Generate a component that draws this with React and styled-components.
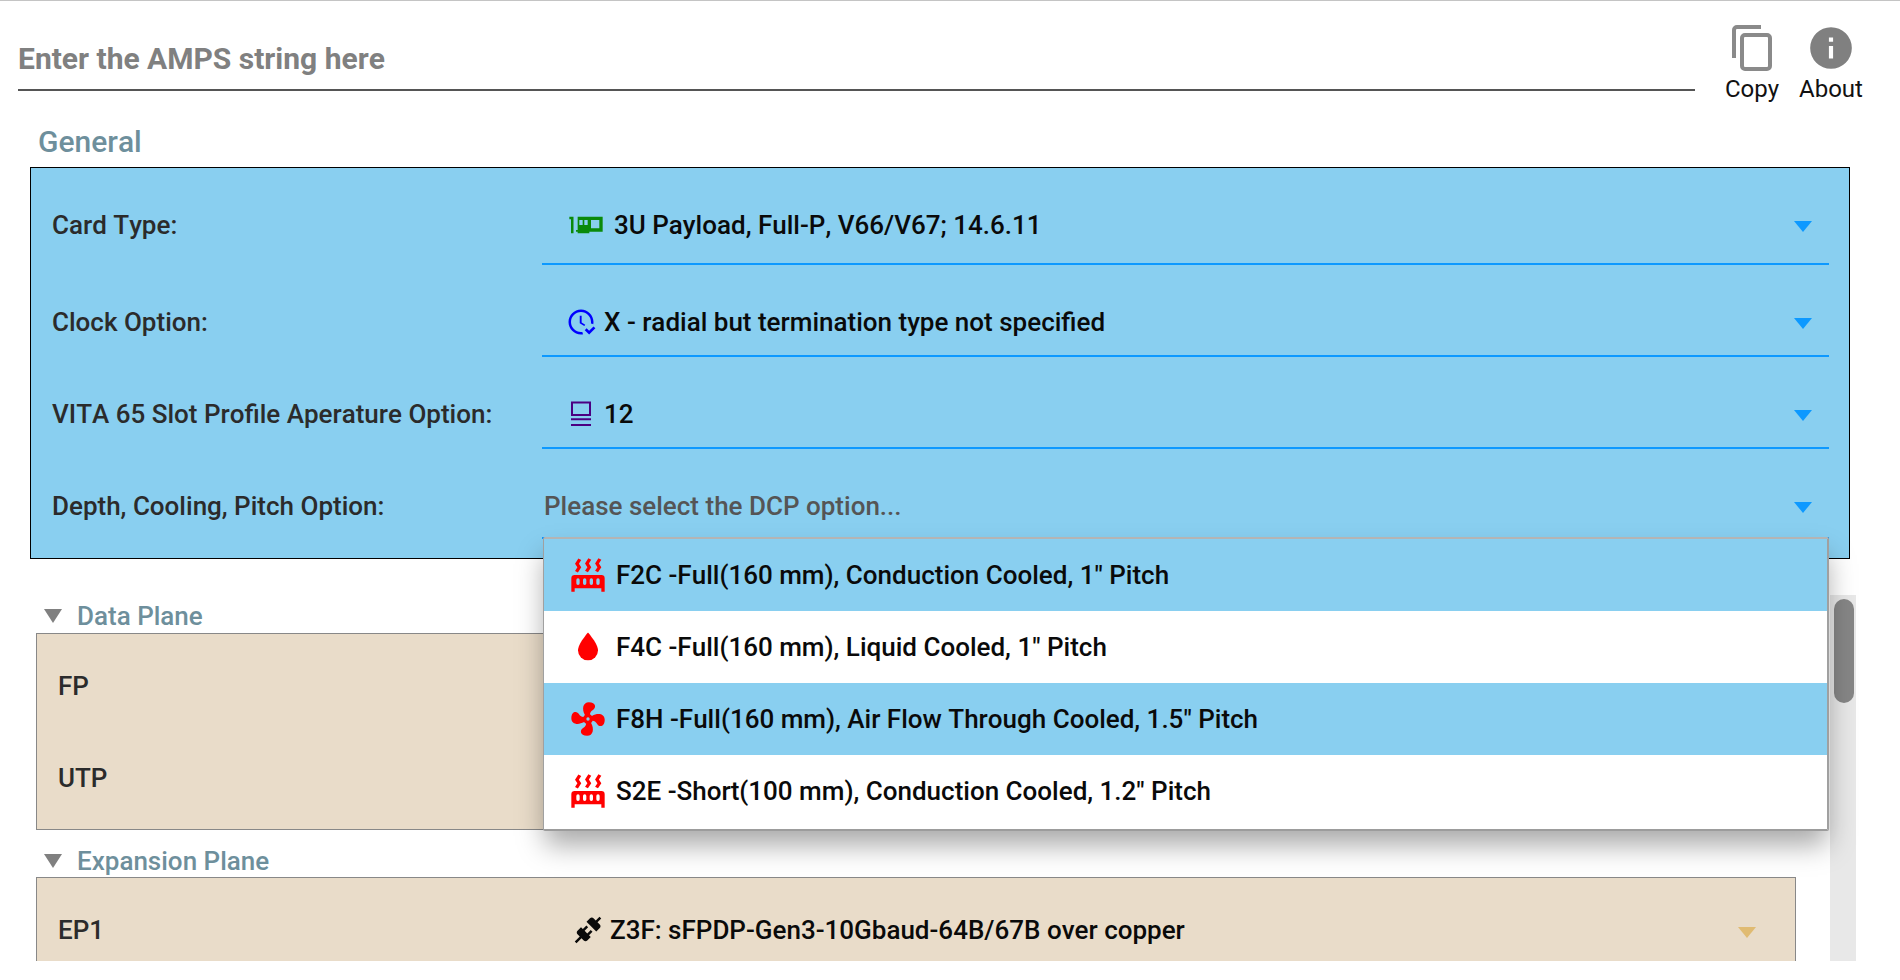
import React from 'react';
import styled, { createGlobalStyle } from 'styled-components';

const GlobalStyle = createGlobalStyle`
  html, body {
    margin: 0;
    padding: 0;
    background: #fff;
    font-family: Roboto, "Liberation Sans", sans-serif;
    font-kerning: none;
  }
`

const Page = styled.div`
  height: 961px;
  overflow: hidden;
  border-top: 1px solid #c4c4c4;
  box-sizing: border-box;
`

const Header = styled.div`
  display: flex;
  height: 119px;
`

const AmpsField = styled.div`
  width: 1677px;
  height: 90px;
  margin-left: 18px;
  box-sizing: border-box;
  border-bottom: 2px solid #555;
  padding-top: 40px;
  font-size: 30px;
  line-height: 36px;
  font-weight: 700;
  color: #808080;
`

const ToolButton = styled.div`
  position: absolute;
  top: 23px;
  left: ${p => p.$left}px;
  width: 80px;
  display: flex;
  flex-direction: column;
  align-items: center;
  font-size: 24px;
  line-height: 28px;
  color: #111;
`

const ToolIcon = styled.div`
  height: 50px;
  margin-bottom: 2px;
  display: flex;
  align-items: center;
`

const SectionTitle = styled.div`
  height: 47px;
  padding: 5px 0 0 38px;
  box-sizing: border-box;
  font-size: 30px;
  line-height: 34px;
  font-weight: 500;
  color: #6e8f9c;
`

const GeneralPanel = styled.div`
  width: 1820px;
  height: 392px;
  margin-left: 30px;
  box-sizing: border-box;
  border: 1.5px solid #000;
  background: #89cff0;
  padding: 0 20px 0 21px;
`

const Row = styled.div`
  display: flex;
  position: relative;
  height: ${p => p.$h}px;
`

const Label = styled.div`
  width: 490px;
  flex-shrink: 0;
  padding-top: 42px;
  font-size: 26px;
  line-height: 30px;
  font-weight: 500;
  color: #2b2b2b;
`

const Select = styled.div`
  flex: 1;
  padding: 42px 0 0 24px;
  box-sizing: border-box;
  border-bottom: 2px solid #0d99ff;
  font-size: 26px;
  line-height: 30px;
  font-weight: 500;
  color: #0a0a0a;
`

const SelectValue = styled.div`
  display: flex;
  align-items: center;
  gap: 8px;
  height: 30px;
  svg { flex-shrink: 0; }
`

const Placeholder = styled.span`
  color: #555;
  margin-left: -22px;
`

const Arrow = styled.div`
  position: absolute;
  top: ${p => p.$top}px;
  right: ${p => p.$right}px;
  width: 0;
  height: 0;
  border-left: 9px solid transparent;
  border-right: 9px solid transparent;
  border-top: 11px solid ${p => p.$color};
`

const Dropdown = styled.div`
  position: absolute;
  top: 88px;
  left: 491px;
  right: 0;
  z-index: 10;
  background: #fff;
  border: 1px solid #a0a0a0;
  border-top: 2px solid #b4b4b4;
  border-bottom: 2px solid #9c9c9c;
  border-right-width: 2px;
  border-radius: 2px;
  box-sizing: border-box;
  box-shadow: 0 16px 26px -2px rgba(0, 0, 0, 0.34);
`

const Option = styled.div`
  height: 72px;
  display: flex;
  align-items: center;
  gap: 8px;
  padding-left: 24px;
  background: ${p => p.$active ? '#89cff0' : '#fff'};
  font-size: 26px;
  font-weight: 500;
  color: #0a0a0a;

  &:last-child {
    height: 74px;
    padding-bottom: 2px;
    box-sizing: border-box;
  }
`

const ScrollArea = styled.div`
  display: flex;
  width: 1856px;
  height: 366px;
  margin-top: 36px;
`

const ScrollContent = styled.div`
  width: 1830px;
  padding-left: 36px;
  box-sizing: border-box;
`

const ScrollTrack = styled.div`
  width: 26px;
  box-sizing: border-box;
  padding: 4px 2px 0 4px;
  background: #e8e8e8;
`

const ScrollThumb = styled.div`
  height: 104px;
  border-radius: 10px;
  background: #868686;
`

const GroupHead = styled.div`
  display: flex;
  align-items: center;
  gap: 15px;
  height: ${p => p.$h}px;
  padding: ${p => p.$pad}px 0 0 8px;
  box-sizing: border-box;
  font-size: 26px;
  font-weight: 500;
  color: #6e8f9c;
`

const Caret = styled.span`
  width: 0;
  height: 0;
  border-left: 9px solid transparent;
  border-right: 9px solid transparent;
  border-top: 14px solid #808080;
`

const GroupPanel = styled.div`
  width: 1760px;
  height: ${p => p.$h}px;
  padding-top: 6px;
  box-sizing: border-box;
  border: 1px solid #888;
  background: #e9dcc9;
`

const GroupRow = styled.div`
  display: flex;
  align-items: center;
  position: relative;
  height: 92px;
  padding-left: 21px;
  font-size: 26px;
  font-weight: 500;
  color: #2b2b2b;
`

const GroupLabel = styled.div`
  width: 515px;
`

const GroupValue = styled.div`
  display: flex;
  align-items: center;
  gap: 7px;
  color: #0a0a0a;
`

const Icon = ({ d, size, color }) => (
  <svg width={size} height={size} viewBox="0 0 24 24" fill={color}><path d={d} /></svg>
)

const cardIcon = 'M2,7H4.5V17H3V8.5H2V7M22,7V16H14V17H7V16H6V15H7V7H22M10,9H8V12H10V9M13,9H11V12H13V9M20,9H15V14H20V9Z'
const clockIcon = 'M23.5 17L18.5 22L15 18.5L16.5 17L18.5 19L22 15.5L23.5 17M13.1 19.9C12.7 20 12.4 20 12 20C7.6 20 4 16.4 4 12S7.6 4 12 4 20 7.6 20 12C20 12.4 20 12.7 19.9 13.1C20.6 13.2 21.2 13.4 21.8 13.7C21.9 13.1 22 12.6 22 12C22 6.5 17.5 2 12 2S2 6.5 2 12 6.5 22 12 22C12.6 22 13.2 21.9 13.7 21.8C13.4 21.3 13.2 20.6 13.1 19.9M12.5 12.3V7H11V13L14.6 15.2L15.4 14.1L12.5 12.3Z'
const radiatorIcon = 'M7.95,3L6.53,5.19L7.95,7.4H7.94L5.95,10.5L4.22,9.6L5.64,7.39L4.22,5.19L6.22,2.09L7.95,3M13.95,2.89L12.53,5.1L13.95,7.3L13.94,7.31L11.95,10.4L10.22,9.5L11.64,7.3L10.22,5.1L12.22,2L13.95,2.89M20,2.89L18.56,5.1L20,7.3V7.31L18,10.4L16.25,9.5L17.67,7.3L16.25,5.1L18.25,2L20,2.89M2,22V14A2,2 0 0,1 4,12H20A2,2 0 0,1 22,14V22H20V20H4V22H2M6,14A1,1 0 0,0 5,15V17A1,1 0 0,0 6,18A1,1 0 0,0 7,17V15A1,1 0 0,0 6,14M10,14A1,1 0 0,0 9,15V17A1,1 0 0,0 10,18A1,1 0 0,0 11,17V15A1,1 0 0,0 10,14M14,14A1,1 0 0,0 13,15V17A1,1 0 0,0 14,18A1,1 0 0,0 15,17V15A1,1 0 0,0 14,14M18,14A1,1 0 0,0 17,15V17A1,1 0 0,0 18,18A1,1 0 0,0 19,17V15A1,1 0 0,0 18,14Z'
const waterIcon = 'M12,20A6,6 0 0,1 6,14C6,10 12,3.25 12,3.25C12,3.25 18,10 18,14A6,6 0 0,1 12,20Z'
const fanIcon = 'M12,11A1,1 0 0,0 11,12A1,1 0 0,0 12,13A1,1 0 0,0 13,12A1,1 0 0,0 12,11M12.5,2C17,2 17.11,5.57 14.75,6.75C13.76,7.24 13.32,8.29 13.13,9.22C13.61,9.42 14.03,9.73 14.35,10.13C18.05,8.13 22.03,8.92 22.03,12.5C22.03,17 18.46,17.1 17.28,14.73C16.78,13.74 15.72,13.3 14.79,13.11C14.59,13.59 14.28,14 13.88,14.34C15.87,18.03 15.08,22 11.5,22C7,22 6.91,18.42 9.27,17.24C10.25,16.75 10.69,15.71 10.89,14.79C10.4,14.59 9.97,14.27 9.65,13.87C5.96,15.85 2,15.07 2,11.5C2,7 5.56,6.89 6.74,9.26C7.24,10.25 8.29,10.68 9.22,10.87C9.41,10.39 9.73,9.97 10.14,9.65C8.15,5.96 8.94,2 12.5,2Z'
const plugIcon = 'M21.4 7.5C22.2 8.3 22.2 9.6 21.4 10.3L18.6 13.1L10.8 5.3L13.6 2.5C14.4 1.7 15.7 1.7 16.4 2.5L18.2 4.3L21.2 1.3L22.6 2.7L19.6 5.7L21.4 7.5M15.6 13.3L14.2 11.9L11.4 14.7L9.3 12.6L12.1 9.8L10.7 8.4L7.9 11.2L6.4 9.8L3.6 12.6C2.8 13.4 2.8 14.7 3.6 15.4L5.4 17.2L1.4 21.2L2.8 22.6L6.8 18.6L8.6 20.4C9.4 21.2 10.7 21.2 11.4 20.4L14.2 17.6L12.8 16.2L15.6 13.3Z'
const infoIcon = 'M13,9H11V7H13M13,17H11V11H13M12,2A10,10 0 0,0 2,12A10,10 0 0,0 12,22A10,10 0 0,0 22,12A10,10 0 0,0 12,2Z'

const CopyIcon = () => (
  <svg width="40" height="46" viewBox="0 0 40 46" fill="none" stroke="#8a8a8a" strokeWidth="4">
    <path d="M29 2H5a3 3 0 0 0-3 3v28" />
    <rect x="10" y="10" width="28" height="34" rx="3" />
  </svg>
)

const SlotIcon = () => (
  <svg width="30" height="30" viewBox="0 0 24 24" fill="none" stroke="#4b0082" strokeWidth="1.6">
    <rect x="4.8" y="2.8" width="14.4" height="10" />
    <path d="M4 16.2H20M4 20.8H20" />
  </svg>
)

const options = [
  { icon: radiatorIcon, text: 'F2C -Full(160 mm), Conduction Cooled, 1" Pitch', active: true },
  { icon: waterIcon, text: 'F4C -Full(160 mm), Liquid Cooled, 1" Pitch' },
  { icon: fanIcon, text: 'F8H -Full(160 mm), Air Flow Through Cooled, 1.5" Pitch', active: true },
  { icon: radiatorIcon, text: 'S2E -Short(100 mm), Conduction Cooled, 1.2" Pitch' },
]

export default function App() {
  return (
    <Page>
      <GlobalStyle />
      <Header>
        <AmpsField>Enter the AMPS string here</AmpsField>
        <ToolButton $left={1712}>
          <ToolIcon><CopyIcon /></ToolIcon>
          <span>Copy</span>
        </ToolButton>
        <ToolButton $left={1791}>
          <ToolIcon><Icon d={infoIcon} size={50} color="#808080" /></ToolIcon>
          <span>About</span>
        </ToolButton>
      </Header>
      <SectionTitle>General</SectionTitle>
      <GeneralPanel>
        <Row $h={97}>
          <Label>Card Type:</Label>
          <Select>
            <SelectValue>
              <Icon d={cardIcon} size={40} color="#0a8a0a" />
              <span>3U Payload, Full-P, V66/V67; 14.6.11</span>
            </SelectValue>
          </Select>
          <Arrow $top={53} $right={17} $color="#0d99ff" />
        </Row>
        <Row $h={92}>
          <Label>Clock Option:</Label>
          <Select>
            <SelectValue>
              <Icon d={clockIcon} size={30} color="#0000ff" />
              <span>X - radial but termination type not specified</span>
            </SelectValue>
          </Select>
          <Arrow $top={53} $right={17} $color="#0d99ff" />
        </Row>
        <Row $h={92}>
          <Label>VITA 65 Slot Profile Aperature Option:</Label>
          <Select>
            <SelectValue>
              <SlotIcon />
              <span>12</span>
            </SelectValue>
          </Select>
          <Arrow $top={53} $right={17} $color="#0d99ff" />
        </Row>
        <Row $h={90}>
          <Label>Depth, Cooling, Pitch Option:</Label>
          <Select>
            <SelectValue>
              <Placeholder>Please select the DCP option...</Placeholder>
            </SelectValue>
          </Select>
          <Arrow $top={53} $right={17} $color="#0d99ff" />
          <Dropdown>
            {options.map(o => (
              <Option key={o.text} $active={o.active}>
                <Icon d={o.icon} size={40} color="#ff0000" />
                <span>{o.text}</span>
              </Option>
            ))}
          </Dropdown>
        </Row>
      </GeneralPanel>
      <ScrollArea>
        <ScrollContent>
          <GroupHead $h={38} $pad={4}><Caret />Data Plane</GroupHead>
          <GroupPanel $h={197}>
            <GroupRow>FP</GroupRow>
            <GroupRow>UTP</GroupRow>
          </GroupPanel>
          <GroupHead $h={47} $pad={14}><Caret />Expansion Plane</GroupHead>
          <GroupPanel $h={120}>
            <GroupRow>
              <GroupLabel>EP1</GroupLabel>
              <GroupValue>
                <Icon d={plugIcon} size={30} color="#0a0a0a" />
                <span>Z3F: sFPDP-Gen3-10Gbaud-64B/67B over copper</span>
              </GroupValue>
              <Arrow $top={43} $right={39} $color="#e0bb72" />
            </GroupRow>
          </GroupPanel>
        </ScrollContent>
        <ScrollTrack>
          <ScrollThumb />
        </ScrollTrack>
      </ScrollArea>
    </Page>
  );
}
